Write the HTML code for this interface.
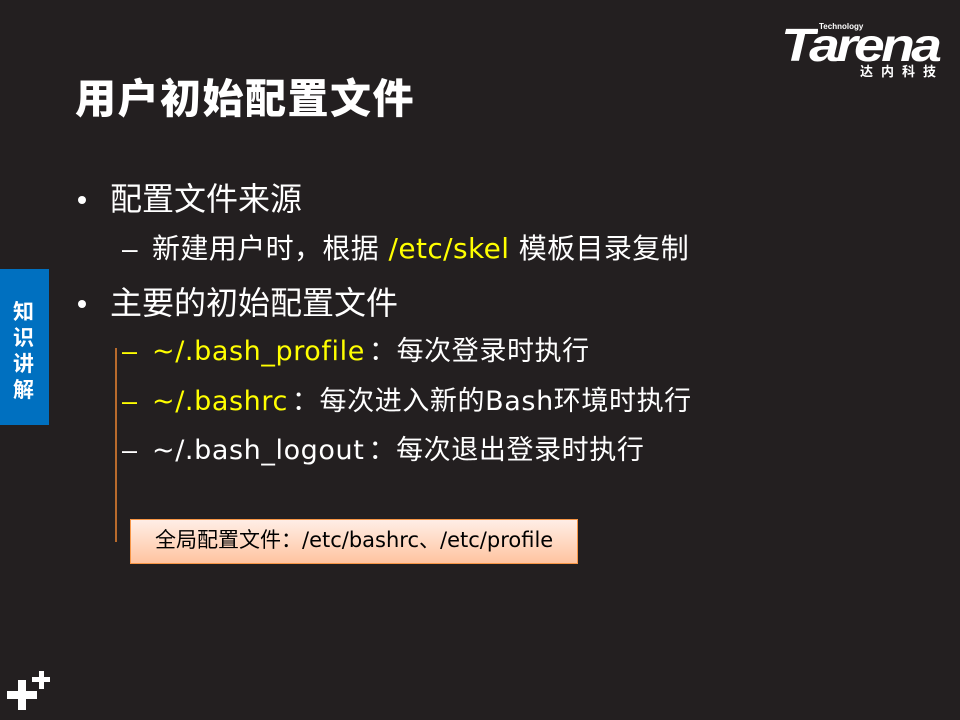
<!DOCTYPE html>
<html><head><meta charset="utf-8"><style>
body{margin:0;width:960px;height:720px;background:#231f20;position:relative;overflow:hidden;font-family:"DejaVu Sans","Noto Sans CJK SC",sans-serif;color:#fff}
.a{position:absolute;white-space:nowrap;line-height:1}
.y{color:#ffff00}
.d{font-family:"Liberation Sans",sans-serif;display:inline-block;width:30px}
.c{margin:0 0 0 4px}
</style></head><body>
<div class="a" style="left:781px;top:22px;font-size:46px;font-weight:bold;font-style:italic;letter-spacing:-3px;transform:scaleX(1.2);transform-origin:left;font-family:'Liberation Sans',sans-serif">Tarena</div>
<div class="a" style="left:818px;top:23px;font-size:8px;font-weight:bold;background:#231f20;padding:0 1px;font-family:'Liberation Sans',sans-serif">Technology</div>
<div class="a" style="left:860px;top:64px;font-size:13px;font-weight:bold;letter-spacing:8px;font-family:'Noto Sans CJK SC',sans-serif">达内科技</div>

<div class="a" style="left:75px;top:75px;font-size:41px;font-weight:900;letter-spacing:1.5px;font-family:'Noto Sans CJK SC',sans-serif">用户初始配置文件</div>

<div style="position:absolute;left:0;top:269px;width:49px;height:156px;background:#0070c0"></div>
<div class="a" style="left:13px;top:298px;font-size:21px;font-weight:bold;width:24px;white-space:normal;line-height:26px;font-family:'Noto Sans CJK SC',sans-serif">知识讲解</div>

<div style="position:absolute;left:78px;top:196px;width:8px;height:8px;border-radius:50%;background:#fff"></div>
<div class="a" style="left:110px;top:183px;font-size:32px">配置文件来源</div>
<div class="a" style="left:122px;top:235px;font-size:28px;letter-spacing:0.4px"><span class="d">–</span>新建用户时，根据 <span class="y">/etc/skel</span> 模板目录复制</div>
<div style="position:absolute;left:78px;top:300px;width:8px;height:8px;border-radius:50%;background:#fff"></div>
<div class="a" style="left:110px;top:287px;font-size:32px">主要的初始配置文件</div>
<div style="position:absolute;left:115px;top:348px;width:2px;height:194px;background:#b86a2c"></div>
<div class="a" style="left:122px;top:338px;font-size:27px;letter-spacing:0.6px"><span class="y"><span class="d">–</span>~/.bash_profile</span><span class="c">：</span>每次登录时执行</div>
<div class="a" style="left:122px;top:388px;font-size:27px;letter-spacing:0.6px"><span class="y"><span class="d">–</span>~/.bashrc</span><span class="c">：</span>每次进入新的Bash环境时执行</div>
<div class="a" style="left:122px;top:437px;font-size:27px;letter-spacing:0.6px"><span class="d">–</span>~/.bash_logout<span class="c">：</span>每次退出登录时执行</div>

<div style="position:absolute;left:130px;top:519px;width:446px;height:43px;border:1px solid #f79646;background:linear-gradient(#ffeee6,#ffc4a0)"></div>
<div class="a" style="left:155px;top:530px;font-size:21px;color:#000">全局配置文件：/etc/bashrc、/etc/profile</div>

<div style="position:absolute;left:7px;top:691px;width:30px;height:8px;background:#fff"></div>
<div style="position:absolute;left:18px;top:680px;width:8px;height:30px;background:#fff"></div>
<div style="position:absolute;left:32px;top:677px;width:18px;height:5px;background:#fff"></div>
<div style="position:absolute;left:38.5px;top:671px;width:5px;height:18px;background:#fff"></div>
</body></html>
